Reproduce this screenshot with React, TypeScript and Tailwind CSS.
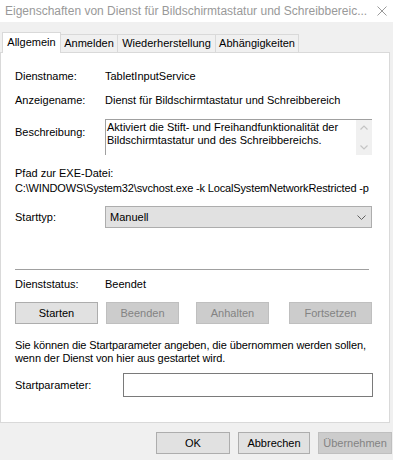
import React from "react";

const btn =
  "h-[22px] flex items-center justify-center border box-border text-[11px]";

export default function App() {
  return (
    <div
      className="w-[393px] h-[460px] bg-[#f0f0f0] overflow-hidden text-[11px] leading-[13px] text-black"
      style={{ fontFamily: '"Liberation Sans", Arial, sans-serif' }}
    >
      {/* Title bar */}
      <div className="h-[22px] bg-white flex items-center pl-[5px] pr-[6px]">
        <div className="flex-1 text-[12px] text-[#999999] whitespace-nowrap overflow-hidden">
          Eigenschaften von Dienst für Bildschirmtastatur und Schreibbereic...
        </div>
        <svg width="10" height="10" viewBox="0 0 10 10" className="ml-2">
          <path d="M0.5 0.5 L9.5 9.5 M9.5 0.5 L0.5 9.5" stroke="#9a9a9a" strokeWidth="1" />
        </svg>
      </div>

      {/* Tabs */}
      <div className="mt-[10px] h-[20px] flex items-end pl-[2px]">
        <div className="relative z-10 -mb-px h-[21px] w-[59px] bg-white border-t border-l border-r border-[#d9d9d9] flex items-center justify-center pb-[1px]">
          Allgemein
        </div>
        <div className="h-[18px] w-[58px] -ml-px bg-[#f0f0f0] border-t border-l border-r border-[#d9d9d9] flex items-center justify-center">
          Anmelden
        </div>
        <div className="h-[18px] w-[99px] -ml-px bg-[#f0f0f0] border-t border-l border-r border-[#d9d9d9] flex items-center justify-center">
          Wiederherstellung
        </div>
        <div className="h-[18px] w-[84px] -ml-px bg-[#f0f0f0] border-t border-l border-r border-[#d9d9d9] flex items-center justify-center">
          Abhängigkeiten
        </div>
      </div>

      {/* Panel */}
      <div className="w-[390px] h-[371px] bg-white border border-[#d9d9d9] box-border pl-[14px]">
        <div className="mt-[17px] flex h-[13px]">
          <div className="w-[90px]">Dienstname:</div>
          <div>TabletInputService</div>
        </div>
        <div className="mt-[11px] flex h-[13px]">
          <div className="w-[90px]">Anzeigename:</div>
          <div className="whitespace-nowrap">Dienst für Bildschirmtastatur und Schreibbereich</div>
        </div>
        <div className="mt-[12px] flex items-start">
          <div className="w-[90px] pt-[7px]">Beschreibung:</div>
          <div className="w-[267px] h-[36px] border-t border-l border-[#a0a0a0] flex">
            <div className="flex-1 pl-[1px] pt-[1px] leading-[13px]">
              Aktiviert die Stift- und Freihandfunktionalität der Bildschirmtastatur und des Schreibbereichs.
            </div>
            <div className="w-[16px] h-full bg-[#f0f0f0] flex flex-col items-center justify-between py-[5px]">
              <svg width="8" height="5" viewBox="0 0 8 5">
                <path d="M0.5 4.5 L4 1 L7.5 4.5" stroke="#c4c4c4" strokeWidth="1.2" fill="none" />
              </svg>
              <svg width="8" height="5" viewBox="0 0 8 5">
                <path d="M0.5 0.5 L4 4 L7.5 0.5" stroke="#c4c4c4" strokeWidth="1.2" fill="none" />
              </svg>
            </div>
          </div>
        </div>
        <div className="mt-[12px] h-[13px]">Pfad zur EXE-Datei:</div>
        <div className="mt-[2px] h-[13px] w-[358px] overflow-hidden whitespace-nowrap tracking-[-0.15px]">
          {"C:\\WINDOWS\\System32\\svchost.exe -k LocalSystemNetworkRestricted -p"}
        </div>
        <div className="mt-[11px] flex items-center">
          <div className="w-[90px]">Starttyp:</div>
          <div className="w-[267px] h-[22px] bg-[#e1e1e1] border border-[#adadad] flex items-center pl-[4px] pr-[5px]">
            <div className="flex-1">Manuell</div>
            <svg width="9" height="5" viewBox="0 0 9 5">
              <path d="M0.5 0.5 L4.5 4.5 L8.5 0.5" stroke="#606060" strokeWidth="1" fill="none" />
            </svg>
          </div>
        </div>
        <div className="mt-[41px] h-px w-[354px] bg-[#a0a0a0]" />
        <div className="mt-[8px] flex h-[13px]">
          <div className="w-[90px]">Dienststatus:</div>
          <div>Beendet</div>
        </div>
        <div className="mt-[11px] flex">
          <div className={`${btn} w-[83px] bg-[#e1e1e1] border-[#adadad]`}>Starten</div>
          <div className={`${btn} w-[73px] ml-[8px] bg-[#cccccc] border-[#bfbfbf] text-[#838383]`}>Beenden</div>
          <div className={`${btn} w-[73px] ml-[17px] bg-[#cccccc] border-[#bfbfbf] text-[#838383]`}>Anhalten</div>
          <div className={`${btn} w-[83px] ml-[20px] bg-[#cccccc] border-[#bfbfbf] text-[#838383]`}>Fortsetzen</div>
        </div>
        <div className="mt-[15px] leading-[13px] tracking-[-0.1px]">
          Sie können die Startparameter angeben, die übernommen werden sollen,
          <br />
          wenn der Dienst von hier aus gestartet wird.
        </div>
        <div className="mt-[8px] flex items-center">
          <div className="w-[108px]">Startparameter:</div>
          <div className="w-[250px] h-[24px] border border-[#7a7a7a] bg-white" />
        </div>
      </div>

      {/* Bottom buttons */}
      <div className="mt-[9px] flex pl-[156px]">
        <div className={`${btn} h-[21px] w-[74px] bg-[#e1e1e1] border-[#adadad]`}>OK</div>
        <div className={`${btn} h-[21px] w-[72px] ml-[8px] bg-[#e1e1e1] border-[#adadad]`}>Abbrechen</div>
        <div className={`${btn} h-[21px] w-[74px] ml-[8px] bg-[#cccccc] border-[#bfbfbf] text-[#838383]`}>Übernehmen</div>
      </div>
    </div>
  );
}
